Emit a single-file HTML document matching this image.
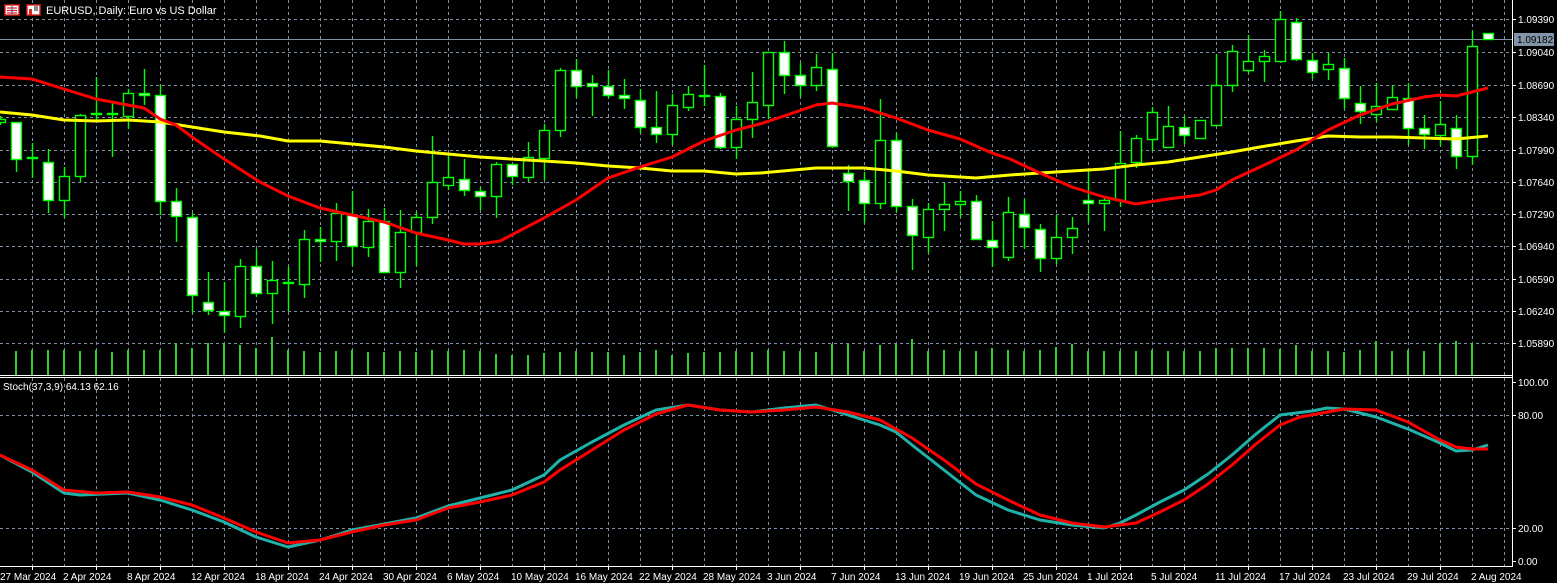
<!DOCTYPE html>
<html><head><meta charset="utf-8"><style>
html,body{margin:0;padding:0;background:#000;width:1557px;height:583px;overflow:hidden}
svg{display:block}
text{font-family:"Liberation Sans",sans-serif;font-size:10px;fill:#fff}
</style></head><body>
<svg width="1557" height="583" viewBox="0 0 1557 583" xmlns="http://www.w3.org/2000/svg">
<rect width="1557" height="583" fill="#000"/>
<!-- grid -->
<g stroke="#7f8fa4" stroke-width="1" stroke-dasharray="3 3" fill="none">
<path d="M32.5 0V566M64.5 0V566M96.5 0V566M128.5 0V566M160.5 0V566M192.5 0V566M224.5 0V566M256.5 0V566M288.5 0V566M320.5 0V566M352.5 0V566M384.5 0V566M416.5 0V566M448.5 0V566M480.5 0V566M512.5 0V566M544.5 0V566M576.5 0V566M608.5 0V566M640.5 0V566M672.5 0V566M704.5 0V566M736.5 0V566M768.5 0V566M800.5 0V566M832.5 0V566M864.5 0V566M896.5 0V566M928.5 0V566M960.5 0V566M992.5 0V566M1024.5 0V566M1056.5 0V566M1088.5 0V566M1120.5 0V566M1152.5 0V566M1184.5 0V566M1216.5 0V566M1248.5 0V566M1280.5 0V566M1312.5 0V566M1344.5 0V566M1376.5 0V566M1408.5 0V566M1440.5 0V566M1472.5 0V566M1504.5 0V566"/>
<path d="M0 19.5H1512M0 52.5H1512M0 85.5H1512M0 117.5H1512M0 150.5H1512M0 182.5H1512M0 214.5H1512M0 246.5H1512M0 279.5H1512M0 311.5H1512M0 343.5H1512M0 415.5H1512M0 528.5H1512"/>
</g>
<rect x="0" y="376" width="1512" height="1" fill="#000"/>
<!-- current price line -->
<path d="M0 39.5H1512" stroke="#8090a0" stroke-width="1"/>
<!-- volumes -->
<path stroke="#32cd32" stroke-width="2" fill="none" d="M16 351V375M32 350V375M48 350V375M64 350V375M80 351V375M96 350V375M112 352V375M128 350V375M144 350V375M160 350V375M176 343V375M192 348V375M208 343V375M224 343V375M240 345V375M256 348V375M272 337V375M288 350V375M304 351V375M320 352V375M336 351V375M352 350V375M368 352V375M384 352V375M400 351V375M416 352V375M432 350V375M448 351V375M464 350V375M480 351V375M496 354V375M512 355V375M528 355V375M544 353V375M560 352V375M576 351V375M592 352V375M608 352V375M624 355V375M640 352V375M656 350V375M672 355V375M688 353V375M704 352V375M720 352V375M736 351V375M752 352V375M768 350V375M784 351V375M800 351V375M816 352V375M832 344V375M848 344V375M864 351V375M880 345V375M896 344V375M912 339V375M928 351V375M944 350V375M960 351V375M976 351V375M992 348V375M1008 350V375M1024 351V375M1040 350V375M1056 347V375M1072 344V375M1088 351V375M1104 351V375M1120 351V375M1136 351V375M1152 350V375M1168 351V375M1184 351V375M1200 351V375M1216 348V375M1232 348V375M1248 348V375M1264 348V375M1280 349V375M1296 345V375M1312 351V375M1328 351V375M1344 352V375M1360 350V375M1376 341V375M1392 351V375M1408 350V375M1424 351V375M1440 343V375M1456 341V375M1472 343V375"/>
<!-- wicks -->
<path stroke="#00ff00" stroke-width="1.4" fill="none" d="M0.5 116V125M16.5 122V172M32.5 143V178M48.5 149V213M64.5 167V218M80.5 114V182M96.5 77V120M112.5 101V157M128.5 89V129M144.5 69V105M160.5 85V215M176.5 188V242M192.5 213V313M208.5 272V315M224.5 282V333M240.5 259V328M256.5 249V297M272.5 261V324M288.5 267V311M304.5 230V298M320.5 227V262M336.5 203V261M352.5 191V266M368.5 209V257M384.5 208V273M400.5 210V288M416.5 212V266M432.5 136V224M448.5 155V190M464.5 159V196M480.5 187V210M496.5 162V218M512.5 164V185M528.5 142V182M544.5 124V180M560.5 68V137M576.5 59V98M592.5 75V116M608.5 70V98M624.5 79V109M640.5 89V133M656.5 91V143M672.5 94V145M688.5 86V111M704.5 65V106M720.5 93V149M736.5 106V159M752.5 72V138M768.5 52V119M784.5 41V94M800.5 63V97M816.5 54V91M832.5 53V148M848.5 165V211M864.5 172V223M880.5 99V209M896.5 133V212M912.5 199V270M928.5 203V253M944.5 183V231M960.5 191V217M976.5 195V239M992.5 221V267M1008.5 197V261M1024.5 199V249M1040.5 224V272M1056.5 215V264M1072.5 217V254M1088.5 169V223M1104.5 198V231M1120.5 131V207M1136.5 135V168M1152.5 107V151M1168.5 106V147M1184.5 116V144M1200.5 120V139M1216.5 54V125M1232.5 45V92M1248.5 35V73M1264.5 50V82M1280.5 11V61M1296.5 18V61M1312.5 53V79M1328.5 53V80M1344.5 58V109M1360.5 86V124M1376.5 83V122M1392.5 85V109M1408.5 83V145M1424.5 115V149M1440.5 101V146M1456.5 115V169M1472.5 31V165"/>
<!-- bullish (hollow) bodies -->
<g fill="#000" stroke="#00ff00" stroke-width="1.4">
<rect x="-4.5" y="119.5" width="10" height="3"/>
<rect x="59.5" y="176.5" width="10" height="24"/>
<rect x="75.5" y="115.5" width="10" height="61"/>
<rect x="91.5" y="113.5" width="10" height="1"/>
<rect x="107.5" y="113.5" width="10" height="1"/>
<rect x="123.5" y="93.5" width="10" height="23"/>
<rect x="27.5" y="157.5" width="10" height="1"/>
<rect x="235.5" y="266.5" width="10" height="50"/>
<rect x="267.5" y="280.5" width="10" height="13"/>
<rect x="283.5" y="282.5" width="10" height="1"/>
<rect x="299.5" y="239.5" width="10" height="45"/>
<rect x="331.5" y="213.5" width="10" height="28"/>
<rect x="363.5" y="221.5" width="10" height="26"/>
<rect x="395.5" y="232.5" width="10" height="40"/>
<rect x="411.5" y="217.5" width="10" height="15"/>
<rect x="427.5" y="182.5" width="10" height="35"/>
<rect x="443.5" y="177.5" width="10" height="8"/>
<rect x="491.5" y="164.5" width="10" height="32"/>
<rect x="523.5" y="157.5" width="10" height="20"/>
<rect x="539.5" y="130.5" width="10" height="28"/>
<rect x="555.5" y="70.5" width="10" height="60"/>
<rect x="667.5" y="105.5" width="10" height="29"/>
<rect x="683.5" y="94.5" width="10" height="13"/>
<rect x="699.5" y="95.5" width="10" height="1"/>
<rect x="731.5" y="119.5" width="10" height="28"/>
<rect x="747.5" y="102.5" width="10" height="17"/>
<rect x="763.5" y="52.5" width="10" height="53"/>
<rect x="811.5" y="67.5" width="10" height="18"/>
<rect x="875.5" y="140.5" width="10" height="63"/>
<rect x="923.5" y="209.5" width="10" height="28"/>
<rect x="939.5" y="204.5" width="10" height="5"/>
<rect x="955.5" y="201.5" width="10" height="3"/>
<rect x="1003.5" y="212.5" width="10" height="45"/>
<rect x="1051.5" y="237.5" width="10" height="21"/>
<rect x="1067.5" y="228.5" width="10" height="9"/>
<rect x="1099.5" y="200.5" width="10" height="3"/>
<rect x="1115.5" y="163.5" width="10" height="37"/>
<rect x="1131.5" y="138.5" width="10" height="24"/>
<rect x="1147.5" y="112.5" width="10" height="27"/>
<rect x="1163.5" y="126.5" width="10" height="21"/>
<rect x="1195.5" y="120.5" width="10" height="18"/>
<rect x="1211.5" y="85.5" width="10" height="40"/>
<rect x="1227.5" y="51.5" width="10" height="34"/>
<rect x="1243.5" y="61.5" width="10" height="9"/>
<rect x="1259.5" y="56.5" width="10" height="5"/>
<rect x="1275.5" y="19.5" width="10" height="42"/>
<rect x="1323.5" y="64.5" width="10" height="5"/>
<rect x="1371.5" y="106.5" width="10" height="8"/>
<rect x="1387.5" y="97.5" width="10" height="12"/>
<rect x="1435.5" y="124.5" width="10" height="11"/>
<rect x="1467.5" y="46.5" width="10" height="110"/>
</g>
<!-- bearish (white) bodies -->
<g fill="#fff" stroke="#00ff00" stroke-width="1.4">
<rect x="11.5" y="122.5" width="10" height="37"/>
<rect x="43.5" y="162.5" width="10" height="38"/>
<rect x="139.5" y="93.5" width="10" height="2"/>
<rect x="155.5" y="95.5" width="10" height="106"/>
<rect x="171.5" y="201.5" width="10" height="15"/>
<rect x="187.5" y="217.5" width="10" height="78"/>
<rect x="203.5" y="302.5" width="10" height="8"/>
<rect x="219.5" y="311.5" width="10" height="4"/>
<rect x="251.5" y="266.5" width="10" height="27"/>
<rect x="315.5" y="239.5" width="10" height="2"/>
<rect x="347.5" y="215.5" width="10" height="31"/>
<rect x="379.5" y="221.5" width="10" height="51"/>
<rect x="459.5" y="179.5" width="10" height="11"/>
<rect x="475.5" y="191.5" width="10" height="5"/>
<rect x="507.5" y="164.5" width="10" height="12"/>
<rect x="571.5" y="70.5" width="10" height="16"/>
<rect x="587.5" y="83.5" width="10" height="3"/>
<rect x="603.5" y="86.5" width="10" height="9"/>
<rect x="619.5" y="95.5" width="10" height="3"/>
<rect x="635.5" y="100.5" width="10" height="27"/>
<rect x="651.5" y="127.5" width="10" height="7"/>
<rect x="715.5" y="96.5" width="10" height="51"/>
<rect x="779.5" y="52.5" width="10" height="23"/>
<rect x="795.5" y="75.5" width="10" height="10"/>
<rect x="827.5" y="69.5" width="10" height="77"/>
<rect x="843.5" y="173.5" width="10" height="8"/>
<rect x="859.5" y="180.5" width="10" height="23"/>
<rect x="891.5" y="140.5" width="10" height="66"/>
<rect x="907.5" y="206.5" width="10" height="29"/>
<rect x="971.5" y="201.5" width="10" height="38"/>
<rect x="987.5" y="240.5" width="10" height="7"/>
<rect x="1019.5" y="214.5" width="10" height="13"/>
<rect x="1035.5" y="229.5" width="10" height="29"/>
<rect x="1083.5" y="200.5" width="10" height="3"/>
<rect x="1179.5" y="127.5" width="10" height="8"/>
<rect x="1291.5" y="22.5" width="10" height="37"/>
<rect x="1307.5" y="60.5" width="10" height="12"/>
<rect x="1339.5" y="68.5" width="10" height="30"/>
<rect x="1355.5" y="103.5" width="10" height="8"/>
<rect x="1403.5" y="98.5" width="10" height="30"/>
<rect x="1419.5" y="128.5" width="10" height="6"/>
<rect x="1451.5" y="128.5" width="10" height="28"/>
<rect x="1483.5" y="33.5" width="10" height="6"/>
</g>
<!-- moving averages -->
<polyline fill="none" stroke="#ffff00" stroke-width="3" stroke-linejoin="round" points="0,112 32,115 64,120 96,121 128,120 160,122 192,127 224,132 260,136 288,141 320,141 352,144 384,147 416,151 448,154 480,157 510,159 544,161 576,163 608,166 640,168 672,171 704,171 736,174 760,173 816,168 864,168 896,171 928,175 960,177 976,178 1010,175 1040,173 1072,171 1104,169 1136,165 1168,162 1200,157 1232,152 1260,147 1296,141 1328,136 1360,137 1392,137 1424,138 1456,139 1488,136"/>
<polyline fill="none" stroke="#ff0000" stroke-width="3" stroke-linejoin="round" points="0,77 32,79 64,89 96,99 128,105 144,108 160,119 176,125 192,137 224,159 260,182 288,196 320,208 352,215 384,222 416,233 448,240 464,244 480,244 500,241 544,218 576,200 608,178 640,167 672,157 704,141 736,130 760,124 784,116 816,105 832,103 864,108 896,118 928,130 960,139 992,153 1010,159 1040,173 1072,187 1104,197 1136,204 1168,199 1200,195 1216,190 1232,180 1260,167 1296,150 1328,130 1360,115 1392,104 1424,97 1440,95 1456,96 1472,92 1488,88"/>
<!-- panel borders -->
<path d="M0 375.5H1512.5M0 377.5H1512.5M1512.5 0V567M0 566.5H1512.5" stroke="#fff" stroke-width="1" fill="none"/>
<!-- stochastic -->
<polyline fill="none" stroke="#20b2aa" stroke-width="3" stroke-linejoin="round" points="0,455 32,472 64,493 80,495 128,493 160,500 192,510 224,522 256,537 288,547 320,540 352,530 384,524 416,518 448,506 480,498 512,490 544,475 560,460 592,442 624,425 656,410 688,405 720,410 752,412 784,408 816,405 848,415 880,425 896,432 912,445 944,470 976,495 1008,510 1040,520 1072,525 1104,528 1120,523 1136,515 1160,502 1184,490 1208,474 1232,455 1256,434 1280,415 1312,411 1327,408 1344,409 1376,417 1408,429 1440,443 1456,451 1472,450 1488,445"/>
<polyline fill="none" stroke="#ff0000" stroke-width="3" stroke-linejoin="round" points="0,455 32,470 64,490 96,493 128,492 160,497 192,505 224,518 256,532 288,543 320,540 352,532 384,525 416,520 448,508 480,502 512,495 544,482 560,470 592,450 624,430 656,414 688,405 720,410 752,412 784,410 816,407 848,412 880,420 912,438 944,460 976,484 1008,500 1040,515 1072,523 1104,527 1136,523 1160,512 1184,500 1208,484 1232,465 1256,444 1280,425 1300,417 1344,409 1376,410 1408,422 1440,440 1456,447 1472,449 1488,449"/>
<!-- price axis ticks -->
<path stroke="#fff" stroke-width="1" d="M1512 19.5H1516M1512 52.5H1516M1512 85.5H1516M1512 117.5H1516M1512 150.5H1516M1512 182.5H1516M1512 214.5H1516M1512 246.5H1516M1512 279.5H1516M1512 311.5H1516M1512 343.5H1516M1512 382.5H1516M1512 415.5H1516M1512 528.5H1516M1512 561.5H1516M32.5 566V570M96.5 566V570M160.5 566V570M224.5 566V570M288.5 566V570M352.5 566V570M416.5 566V570M480.5 566V570M544.5 566V570M608.5 566V570M672.5 566V570M736.5 566V570M800.5 566V570M864.5 566V570M928.5 566V570M992.5 566V570M1056.5 566V570M1120.5 566V570M1184.5 566V570M1248.5 566V570M1312.5 566V570M1376.5 566V570M1440.5 566V570"/>
<g>
<text x="1518" y="23">1.09390</text>
<text x="1518" y="56">1.09040</text>
<text x="1518" y="89">1.08690</text>
<text x="1518" y="121">1.08340</text>
<text x="1518" y="154">1.07990</text>
<text x="1518" y="186">1.07640</text>
<text x="1518" y="218">1.07290</text>
<text x="1518" y="250">1.06940</text>
<text x="1518" y="283">1.06590</text>
<text x="1518" y="315">1.06240</text>
<text x="1518" y="347">1.05890</text>
<text x="1518" y="386">100.00</text>
<text x="1518" y="419">80.00</text>
<text x="1518" y="532">20.00</text>
<text x="1518" y="565">0.00</text>
</g>
<rect x="1514" y="33" width="40" height="13" fill="#8294a7"/>
<text x="1517" y="43" style="fill:#000">1.09182</text>
<!-- dates -->
<g>
<text x="0" y="580">27 Mar 2024</text>
<text x="63" y="580">2 Apr 2024</text>
<text x="127" y="580">8 Apr 2024</text>
<text x="191" y="580">12 Apr 2024</text>
<text x="255" y="580">18 Apr 2024</text>
<text x="319" y="580">24 Apr 2024</text>
<text x="383" y="580">30 Apr 2024</text>
<text x="447" y="580">6 May 2024</text>
<text x="511" y="580">10 May 2024</text>
<text x="575" y="580">16 May 2024</text>
<text x="639" y="580">22 May 2024</text>
<text x="703" y="580">28 May 2024</text>
<text x="767" y="580">3 Jun 2024</text>
<text x="831" y="580">7 Jun 2024</text>
<text x="895" y="580">13 Jun 2024</text>
<text x="959" y="580">19 Jun 2024</text>
<text x="1023" y="580">25 Jun 2024</text>
<text x="1087" y="580">1 Jul 2024</text>
<text x="1151" y="580">5 Jul 2024</text>
<text x="1215" y="580">11 Jul 2024</text>
<text x="1279" y="580">17 Jul 2024</text>
<text x="1343" y="580">23 Jul 2024</text>
<text x="1407" y="580">29 Jul 2024</text>
<text x="1471" y="580">2 Aug 2024</text>
</g>
<!-- title & icons -->
<rect x="5" y="5" width="14" height="10" fill="#fff" stroke="#d22" stroke-width="1.4"/>
<path d="M7 8H17M7 10.5H17M7 13H17" stroke="#d22" stroke-width="1.2"/>
<path d="M12 6V14" stroke="#3355cc" stroke-width="1"/>
<rect x="27" y="5" width="13" height="10" fill="#fff" stroke="#d22" stroke-width="1.4"/>
<rect x="29" y="9" width="3" height="6" fill="#d22"/>
<rect x="34" y="6" width="4" height="5" fill="#888"/>
<text x="46" y="14" style="font-size:11px">EURUSD, Daily:  Euro vs US Dollar</text>
<text x="3" y="390">Stoch(37,3,9) 64.13 62.16</text>
</svg>
</body></html>
